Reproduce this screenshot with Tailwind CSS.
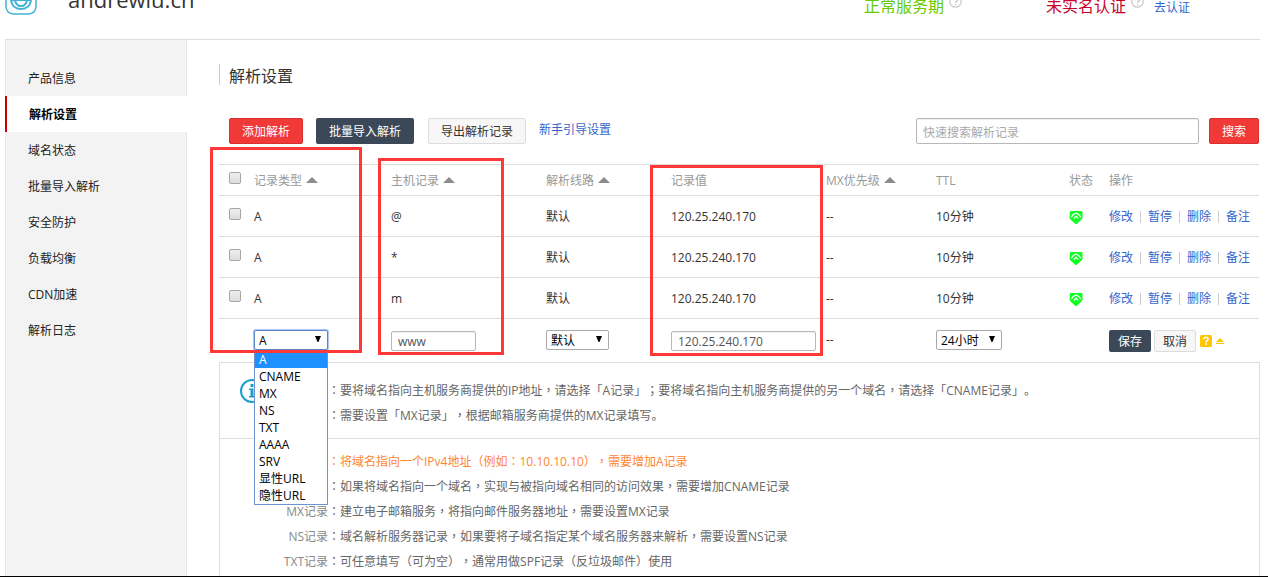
<!DOCTYPE html>
<html lang="zh-CN">
<head>
<meta charset="utf-8">
<title>解析设置</title>
<script src="https://cdn.jsdelivr.net/npm/@tailwindcss/browser@4"></script>
</head>
<body class="flex h-screen flex-col overflow-hidden border-b border-black bg-white font-['Open_Sans','Noto_Sans_CJK_SC',sans-serif] text-xs text-[#333]">
<svg class="hidden">
  <symbol id="up" viewBox="0 0 12 6"><path d="M6 0 12 6H0z" fill="#8c8c8c"/></symbol>
  <symbol id="down" viewBox="0 0 7 7"><path d="M0 0h7L4 7H3z" fill="#000"/></symbol>
  <symbol id="help" viewBox="0 0 13 13"><circle cx="6.5" cy="6.5" r="5.7" fill="none" stroke="#ccc" stroke-width="1.3"/><path d="M4.600 5.200C4.600 2.600 8.600 2.700 8.500 5c0 1.300-1.900 1.400-1.900 3M6.600 9v1.300" fill="none" stroke="#c4c4c4" stroke-width="1.300"/></symbol>
  <symbol id="shield" viewBox="0 0 14 14"><path d="M1 1.500 2 1h10l1.500.5V8L12 10 7.500 14h-1L2 10 .5 8z" fill="#0cff1e"/><path d="M2.300 7.200 4 4.800 7 3l3 1.800 1.700 2.400M4.800 8.600 7 6.200l2.200 2.400" fill="none" stroke="#fff" stroke-width="1.300"/></symbol>
</svg>

<header class="mr-2 ml-[5px] -mt-[30px] flex h-[70px] shrink-0 items-center border-b border-[#ddd] pt-0.5 pr-[70px]">
  <svg class="mb-[14px] size-8" viewBox="0 0 32 32" fill="none" stroke="#3fb3d3">
    <path d="M5 1h22q4 0 4 4v18q0 7-7 8H8q-7-1-7-8V5q0-4 4-4z" stroke-width="1.500"/>
    <path d="M6 17q1 9 10 9t10-9" stroke-width="2"/>
    <path d="M10 17q1 6 6 6t6-6M6 17h20" stroke-width="2"/>
  </svg>
  <h1 class="mb-[14px] ml-[31px] text-[22px] leading-8 text-[#333]">andrewlu.cn</h1>
  <span class="ml-auto text-base text-[#6c0]">正常服务期</span>
  <svg class="mb-2 ml-[5px] size-[13px]"><use href="#help"/></svg>
  <span class="ml-[84px] text-base text-[#c9002c]">未实名认证</span>
  <svg class="mb-2 ml-[5px] size-[13px]"><use href="#help"/></svg>
  <a href="#" class="ml-[10px] pt-1 text-[#36c]">去认证</a>
</header>

<div class="mr-2 ml-[5px] flex min-h-0 flex-1">
  <nav class="w-[182px] shrink-0 bg-[#f3f3f3] pt-5 leading-[34px] text-[#222] shadow-[inset_1px_0_#e6e6e6,inset_-1px_0_#e6e6e6]">
    <a href="#" class="block pt-0.5 pl-[23px]">产品信息</a>
    <a href="#" aria-current="page" class="block border-l-2 border-[#c00] bg-white pt-0.5 pl-[22px] font-bold text-black">解析设置</a>
    <a href="#" class="block pt-0.5 pl-[23px]">域名状态</a>
    <a href="#" class="block pt-0.5 pl-[23px]">批量导入解析</a>
    <a href="#" class="block pt-0.5 pl-[23px]">安全防护</a>
    <a href="#" class="block pt-0.5 pl-[23px]">负载均衡</a>
    <a href="#" class="block pt-0.5 pl-[23px]">CDN加速</a>
    <a href="#" class="block pt-0.5 pl-[23px]">解析日志</a>
  </nav>

  <main class="relative ml-8 flex min-w-0 flex-1 flex-col pt-6">
    <h2 class="h-[21px] shrink-0 border-l border-[#ccc] pl-[9px] text-base leading-6">解析设置</h2>

    <div class="mt-[33px] mb-5 flex h-[26px] shrink-0 items-center pr-px pl-[10px] [&_button]:pt-0.5">
      <button class="h-[26px] w-[74px] rounded-xs border border-[#d8302f] bg-[#f13a38] text-white">添加解析</button>
      <button class="ml-[13px] h-[26px] w-[98px] rounded-xs bg-[#3b4858] text-white">批量导入解析</button>
      <button class="ml-[14px] h-[26px] w-[98px] rounded-xs border border-[#ddd] bg-[#f7f7f7]">导出解析记录</button>
      <a href="#" class="mb-0.5 ml-[13px] text-[#36c]">新手引导设置</a>
      <input type="text" aria-label="快速搜索解析记录" placeholder="快速搜索解析记录" class="ml-auto h-[26px] w-[283px] rounded-xs border border-[#b8b8b8] px-[6px] pt-0.5 shadow-[inset_0_1px_1px_#eee] placeholder:text-[#a9a9a9]">
      <button class="ml-[10px] h-[26px] w-[50px] rounded-xs border border-[#d8302f] bg-[#f13a38] text-white">搜索</button>
    </div>

    <div class="shrink-0 pr-px">
    <table class="w-full table-fixed border-t border-[#ddd] text-left [&_td]:px-0 [&_td]:pb-0 [&_th]:px-0 [&_th]:pb-0 [&_tr]:border-[#ddd]">
      <colgroup><col class="w-[35px]"><col class="w-[137px]"><col class="w-[155px]"><col class="w-[125px]"><col class="w-[155px]"><col class="w-[110px]"><col class="w-[133px]"><col class="w-[40px]"><col class="w-[150px]"></colgroup>
      <thead>
        <tr class="h-[31px] border-b text-[#999] [&_th]:pt-0.5 [&_th]:font-normal">
          <th><input type="checkbox" aria-label="全选" class="mb-[6px] ml-[10px] block size-3 appearance-none rounded-xs border border-[#a6a6a6] bg-linear-to-b from-[#eee] to-[#ddd]"></th>
          <th><span class="flex items-center gap-1">记录类型 <svg class="mb-0.5 h-[6px] w-3"><use href="#up"/></svg></span></th>
          <th><span class="flex items-center gap-1">主机记录 <svg class="mb-0.5 h-[6px] w-3"><use href="#up"/></svg></span></th>
          <th><span class="flex items-center gap-1">解析线路 <svg class="mb-0.5 h-[6px] w-3"><use href="#up"/></svg></span></th>
          <th>记录值</th>
          <th><span class="flex items-center gap-1">MX优先级 <svg class="mb-0.5 h-[6px] w-3"><use href="#up"/></svg></span></th>
          <th>TTL</th><th>状态</th><th>操作</th>
        </tr>
      </thead>
      <tbody>
        <tr class="h-[41px] border-b [&_td]:pt-0.5">
          <td><input type="checkbox" aria-label="选择记录 @" class="mb-[6px] ml-[10px] block size-3 appearance-none rounded-xs border border-[#a6a6a6] bg-linear-to-b from-[#eee] to-[#ddd]"></td>
          <td>A</td><td>@</td><td>默认</td><td>120.25.240.170</td><td>--</td><td>10分钟</td>
          <td><svg class="size-[14px]"><use href="#shield"/></svg></td>
          <td><div class="flex items-center gap-[7px] text-[#36c]"><a href="#">修改</a><i class="h-3 w-px bg-[#ccc]"></i><a href="#">暂停</a><i class="h-3 w-px bg-[#ccc]"></i><a href="#">删除</a><i class="h-3 w-px bg-[#ccc]"></i><a href="#">备注</a></div></td>
        </tr>
        <tr class="h-[41px] border-b [&_td]:pt-0.5">
          <td><input type="checkbox" aria-label="选择记录 *" class="mb-[6px] ml-[10px] block size-3 appearance-none rounded-xs border border-[#a6a6a6] bg-linear-to-b from-[#eee] to-[#ddd]"></td>
          <td>A</td><td>*</td><td>默认</td><td>120.25.240.170</td><td>--</td><td>10分钟</td>
          <td><svg class="size-[14px]"><use href="#shield"/></svg></td>
          <td><div class="flex items-center gap-[7px] text-[#36c]"><a href="#">修改</a><i class="h-3 w-px bg-[#ccc]"></i><a href="#">暂停</a><i class="h-3 w-px bg-[#ccc]"></i><a href="#">删除</a><i class="h-3 w-px bg-[#ccc]"></i><a href="#">备注</a></div></td>
        </tr>
        <tr class="h-[41px] border-b [&_td]:pt-0.5">
          <td><input type="checkbox" aria-label="选择记录 m" class="mb-[6px] ml-[10px] block size-3 appearance-none rounded-xs border border-[#a6a6a6] bg-linear-to-b from-[#eee] to-[#ddd]"></td>
          <td>A</td><td>m</td><td>默认</td><td>120.25.240.170</td><td>--</td><td>10分钟</td>
          <td><svg class="size-[14px]"><use href="#shield"/></svg></td>
          <td><div class="flex items-center gap-[7px] text-[#36c]"><a href="#">修改</a><i class="h-3 w-px bg-[#ccc]"></i><a href="#">暂停</a><i class="h-3 w-px bg-[#ccc]"></i><a href="#">删除</a><i class="h-3 w-px bg-[#ccc]"></i><a href="#">备注</a></div></td>
        </tr>
        <tr class="h-[43px] text-black [&_td]:pt-0">
          <td></td>
          <td>
            <div class="relative w-[74px]">
              <select aria-label="记录类型" class="block h-5 w-full appearance-none rounded-xs border border-[#5b84c9] bg-white pt-px pl-1 leading-[17px] shadow-[0_0_1px_1px_#a9c4ee]"><option>A</option></select>
              <svg class="absolute top-[6px] right-[7px] size-[6px]"><use href="#down"/></svg>
              <ul role="listbox" aria-label="记录类型选项" class="absolute top-[21px] left-0 z-10 w-[74px] border border-t-0 border-[#6f92d2] bg-white leading-[17px] [&_li]:pl-1">
                <li role="option" aria-selected="true" class="bg-[#1e90ff] text-white">A</li>
                <li role="option">CNAME</li><li role="option">MX</li><li role="option">NS</li><li role="option">TXT</li><li role="option">AAAA</li><li role="option">SRV</li><li role="option">显性URL</li><li role="option">隐性URL</li>
              </ul>
            </div>
          </td>
          <td><input type="text" aria-label="主机记录" value="www" class="mt-[2px] block h-5 w-[85px] rounded-xs border border-[#b8b8b8] px-[6px] text-[#555] shadow-[inset_0_1px_1px_#eee]"></td>
          <td><div class="relative w-[63px]"><select aria-label="解析线路" class="block h-5 w-full appearance-none rounded-xs border border-[#a9a9a9] bg-white pt-px pl-1 leading-[17px]"><option>默认</option></select><svg class="absolute top-[6px] right-[7px] size-[6px]"><use href="#down"/></svg></div></td>
          <td><input type="text" aria-label="记录值" value="120.25.240.170" class="mt-[2px] block h-5 w-[145px] rounded-xs border border-[#b8b8b8] px-[6px] text-[#555] shadow-[inset_0_1px_1px_#eee]"></td>
          <td class="text-[#333]">--</td>
          <td><div class="relative w-[66px]"><select aria-label="TTL" class="block h-5 w-full appearance-none rounded-xs border border-[#a9a9a9] bg-white pt-px pl-1 leading-[17px]"><option>24小时</option></select><svg class="absolute top-[6px] right-[7px] size-[6px]"><use href="#down"/></svg></div></td>
          <td></td>
          <td><div class="mt-0.5 flex items-center">
            <button class="h-[22px] w-[42px] rounded-xs bg-[#3b4858] pt-0.5 text-white">保存</button>
            <button class="ml-[3px] h-[22px] w-[42px] rounded-xs border border-[#ddd] bg-[#f7f7f7] pt-0.5 text-[#333]">取消</button>
            <svg class="ml-1 size-3" viewBox="0 0 12 12"><rect width="12" height="12" rx="1.500" fill="#ffc600"/><path d="M3.800 4.300C3.900 1.500 8.300 1.700 8.100 4.200 8 5.600 6 5.700 6 7.400M6 8.300V10" fill="none" stroke="#fff" stroke-width="1.600"/></svg>
            <svg class="ml-1 h-[7px] w-2" viewBox="0 0 8 7"><path d="M4 0 8 4H0zM0 5h8v1H0z" fill="#ffc600"/></svg>
          </div></td>
        </tr>
      </tbody>
    </table>
    </div>

    <section class="flex-1 border border-b-0 border-[#ddd] leading-[25px] whitespace-nowrap text-[#666] [text-spacing-trim:space-all] [&_i]:font-['Noto_Sans_CJK_TC'] [&_i]:leading-none [&_i]:not-italic">
      <div class="flex h-[76px] border-b border-[#ddd] pt-[15px]">
        <svg class="mt-px ml-5 size-6" viewBox="0 0 24 24"><circle cx="12" cy="12" r="11" fill="none" stroke="#1b9fcc" stroke-width="2"/><path d="M10.500 5h3v3h-3zM9 9.500h4.500V17H15v1.500H9V17h1.500v-6H9z" fill="#1b9fcc"/></svg>
        <div class="ml-16">
          <p><i lang="zh-TW">：</i>要将域名指向主机服务商提供的IP地址<i lang="zh-TW">，</i>请选择「A记录」<i lang="zh-TW">；</i>要将域名指向主机服务商提供的另一个域名<i lang="zh-TW">，</i>请选择「CNAME记录」。</p>
          <p><i lang="zh-TW">：</i>需要设置「MX记录」<i lang="zh-TW">，</i>根据邮箱服务商提供的MX记录填写。</p>
        </div>
      </div>
      <dl class="grid grid-cols-[108px_1fr] pt-[10px] [&_dt]:text-right [&_dt]:text-[#888]">
        <dt></dt><dd class="text-[#ff8533]"><i lang="zh-TW">：</i>将域名指向一个IPv4地址<i lang="zh-TW">（</i>例如<i lang="zh-TW">：</i>10.10.10.10<i lang="zh-TW">），</i>需要增加A记录</dd>
        <dt></dt><dd><i lang="zh-TW">：</i>如果将域名指向一个域名<i lang="zh-TW">，</i>实现与被指向域名相同的访问效果<i lang="zh-TW">，</i>需要增加CNAME记录</dd>
        <dt>MX记录</dt><dd><i lang="zh-TW">：</i>建立电子邮箱服务<i lang="zh-TW">，</i>将指向邮件服务器地址<i lang="zh-TW">，</i>需要设置MX记录</dd>
        <dt>NS记录</dt><dd><i lang="zh-TW">：</i>域名解析服务器记录<i lang="zh-TW">，</i>如果要将子域名指定某个域名服务器来解析<i lang="zh-TW">，</i>需要设置NS记录</dd>
        <dt>TXT记录</dt><dd><i lang="zh-TW">：</i>可任意填写<i lang="zh-TW">（</i>可为空<i lang="zh-TW">），</i>通常用做SPF记录<i lang="zh-TW">（</i>反垃圾邮件<i lang="zh-TW">）</i>使用</dd>
      </dl>
    </section>

    <div class="pointer-events-none absolute top-[107px] -left-[9px] z-20 h-[206px] w-[152px] border-3 border-[#ff3838]"></div>
    <div class="pointer-events-none absolute top-[118px] left-[159px] z-20 h-[197px] w-[126px] border-3 border-[#ff3838]"></div>
    <div class="pointer-events-none absolute top-[125px] left-[431px] z-20 h-[191px] w-[173px] border-3 border-[#ff3838]"></div>
  </main>
</div>
</body>
</html>
